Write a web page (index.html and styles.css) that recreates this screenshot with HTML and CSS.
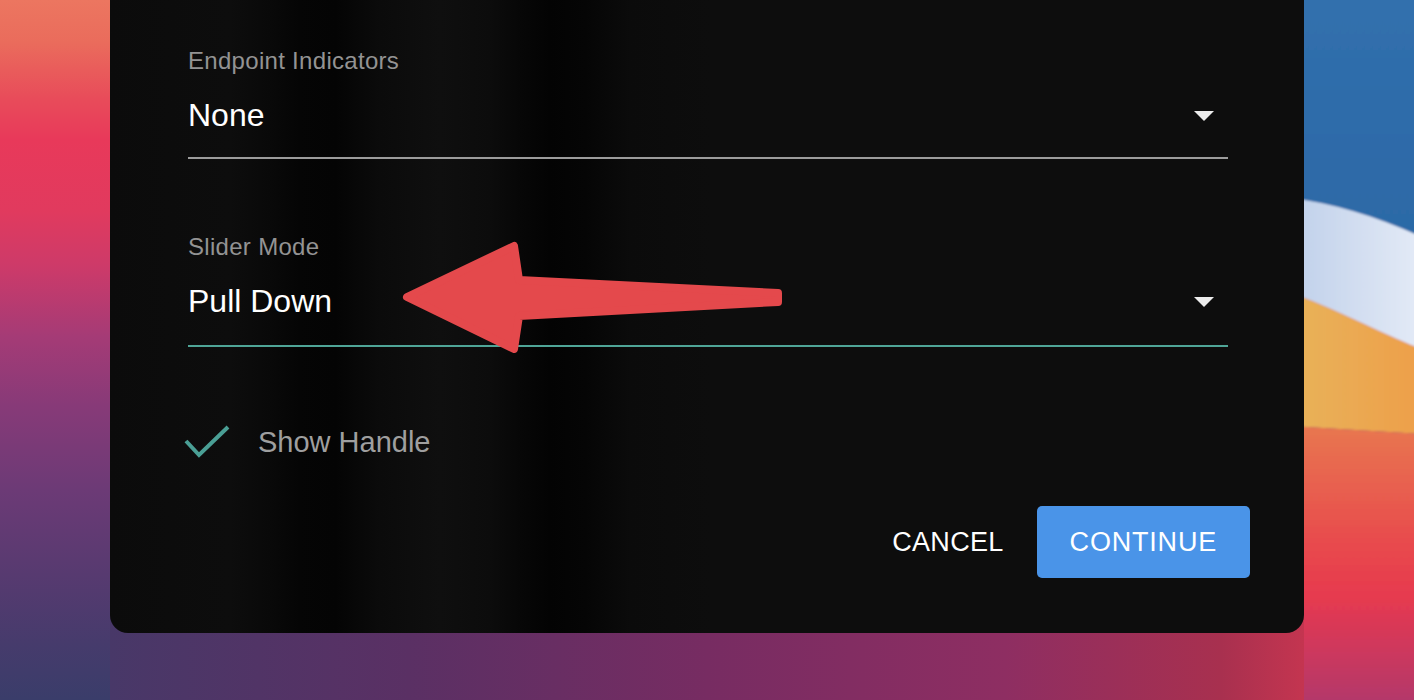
FILE: index.html
```html
<!DOCTYPE html>
<html lang="en">
<head>
<meta charset="utf-8">
<title>Slider settings</title>
<link rel="stylesheet" href="styles.css">
</head>
<body>
<svg class="wallpaper" width="1414" height="700" viewBox="0 0 1414 700" aria-hidden="true">
  <defs>
    <linearGradient id="gLeft" x1="0" y1="0" x2="0" y2="700" gradientUnits="userSpaceOnUse">
      <stop offset="0" stop-color="#ec7660"/>
      <stop offset="0.06" stop-color="#ea6c5c"/>
      <stop offset="0.14" stop-color="#e84c5a"/>
      <stop offset="0.2" stop-color="#e8395a"/>
      <stop offset="0.3" stop-color="#e13a5e"/>
      <stop offset="0.38" stop-color="#cd3a69"/>
      <stop offset="0.48" stop-color="#a53b76"/>
      <stop offset="0.58" stop-color="#873a78"/>
      <stop offset="0.7" stop-color="#6c3a76"/>
      <stop offset="0.82" stop-color="#573a70"/>
      <stop offset="0.92" stop-color="#463b6c"/>
      <stop offset="1" stop-color="#3a3d6a"/>
    </linearGradient>
    <linearGradient id="gBottom" x1="110" y1="0" x2="1304" y2="0" gradientUnits="userSpaceOnUse">
      <stop offset="0" stop-color="#483868"/>
      <stop offset="0.25" stop-color="#5a3064"/>
      <stop offset="0.5" stop-color="#772c62"/>
      <stop offset="0.75" stop-color="#8e2e62"/>
      <stop offset="0.93" stop-color="#a8304f"/>
      <stop offset="1" stop-color="#c43550"/>
    </linearGradient>
    <linearGradient id="gBlue" x1="0" y1="0" x2="0" y2="260" gradientUnits="userSpaceOnUse">
      <stop offset="0" stop-color="#3170ad"/>
      <stop offset="0.3" stop-color="#2f6dab"/>
      <stop offset="1" stop-color="#2c69a6"/>
    </linearGradient>
    <linearGradient id="gWhite" x1="1290" y1="0" x2="1414" y2="0" gradientUnits="userSpaceOnUse">
      <stop offset="0" stop-color="#bfd0ea"/>
      <stop offset="1" stop-color="#e2e9f6"/>
    </linearGradient>
    <linearGradient id="gOrange" x1="1290" y1="0" x2="1414" y2="0" gradientUnits="userSpaceOnUse">
      <stop offset="0" stop-color="#e8b35a"/>
      <stop offset="1" stop-color="#eda04b"/>
    </linearGradient>
    <linearGradient id="gRed" x1="0" y1="428" x2="0" y2="700" gradientUnits="userSpaceOnUse">
      <stop offset="0" stop-color="#e8764f"/>
      <stop offset="0.2" stop-color="#e8624f"/>
      <stop offset="0.45" stop-color="#e8484e"/>
      <stop offset="0.62" stop-color="#e63a4f"/>
      <stop offset="0.8" stop-color="#d0395c"/>
      <stop offset="1" stop-color="#b4396a"/>
    </linearGradient>
    <filter id="soft" x="-5%" y="-5%" width="110%" height="110%">
      <feGaussianBlur stdDeviation="1.2"/>
    </filter>
  </defs>
  <rect x="0" y="0" width="1414" height="700" fill="url(#gLeft)"/>
  <g filter="url(#soft)">
    <rect x="1290" y="-10" width="134" height="270" fill="url(#gBlue)"/>
    <path d="M1290,198 C1335,203 1380,218 1424,238 L1424,350 C1385,336 1335,308 1290,293 Z" fill="url(#gWhite)"/>
    <path d="M1290,293 C1335,308 1385,336 1424,350 L1424,434 L1290,426 Z" fill="url(#gOrange)"/>
    <path d="M1290,426 L1424,434 L1424,710 L1290,710 Z" fill="url(#gRed)"/>
  </g>
  <rect x="110" y="600" width="1194" height="100" fill="url(#gBottom)"/>
</svg>

<main class="dialog">
  <section class="field">
    <div class="field-label">Endpoint Indicators</div>
    <div class="select">
      <span class="select-value">None</span>
      <span class="caret"></span>
    </div>
  </section>

  <section class="field field-second">
    <div class="field-label">Slider Mode</div>
    <div class="select select-focused">
      <span class="select-value">Pull Down</span>
      <span class="caret"></span>
    </div>
  </section>

  <label class="check-row">
    <svg class="check-icon" width="52" height="34" viewBox="0 0 52 34" aria-hidden="true">
      <path d="M4,16 L17,30 L46,2" fill="none" stroke="#4a9f95" stroke-width="4"/>
    </svg>
    <span class="check-text">Show Handle</span>
  </label>

  <div class="actions">
    <button class="btn btn-text" type="button">Cancel</button>
    <button class="btn btn-primary" type="button">Continue</button>
  </div>
</main>

<svg class="annotation" width="1414" height="700" viewBox="0 0 1414 700" aria-hidden="true">
  <path d="M407,297 L514,246 L519,280 L778,293 L778,302 L519,316 L514,349 Z"
        fill="#e4494c" stroke="#e4494c" stroke-width="8" stroke-linejoin="round"/>
</svg>
</body>
</html>
```

FILE: styles.css
```css
* {
  box-sizing: border-box;
}

html, body {
  margin: 0;
  padding: 0;
}

body {
  width: 1414px;
  height: 700px;
  overflow: hidden;
  position: relative;
  font-family: "Liberation Sans", Arial, Helvetica, sans-serif;
  background: #3a3d6a;
}

.wallpaper {
  position: absolute;
  top: 0;
  left: 0;
  z-index: 0;
  display: block;
}

.annotation {
  position: absolute;
  top: 0;
  left: 0;
  z-index: 2;
  pointer-events: none;
}

.dialog {
  position: relative;
  z-index: 1;
  margin-left: 110px;
  width: 1194px;
  height: 633px;
  padding: 49px 54px 0 78px;
  border-radius: 0 0 18px 18px;
  display: flex;
  flex-direction: column;
  background: linear-gradient(90deg,
    #0b0b0b 0px,
    #0d0d0d 120px,
    #090909 160px,
    #050505 190px,
    #040404 225px,
    #0b0b0b 270px,
    #0f0f0f 330px,
    #0c0c0c 380px,
    #070707 410px,
    #030303 440px,
    #050505 475px,
    #0b0b0b 520px,
    #0d0d0d 600px,
    #0d0d0d 100%);
}

.field {
  margin-right: 22px;
}

.field-second {
  margin-top: 76px;
}

.field-label {
  font-size: 24px;
  line-height: 24px;
  letter-spacing: 0.3px;
  color: #939393;
}

.select {
  margin-top: 26px;
  display: flex;
  align-items: flex-start;
  justify-content: space-between;
  padding-bottom: 26px;
  border-bottom: 2px solid #9c9c9c;
}

.select-focused {
  padding-bottom: 28px;
  border-bottom-color: #4fa597;
}

.select-value {
  font-size: 32px;
  line-height: 32px;
  color: #ffffff;
}

.caret {
  width: 0;
  height: 0;
  margin-top: 12px;
  margin-right: 14px;
  border-left: 10px solid transparent;
  border-right: 10px solid transparent;
  border-top: 10px solid #ececec;
}

.check-row {
  margin-top: 78px;
  display: flex;
  align-items: center;
  height: 34px;
}

.check-icon {
  display: block;
  margin-left: -6px;
  margin-right: 24px;
}

.check-text {
  font-size: 29px;
  line-height: 34px;
  color: #9f9f9f;
}

.actions {
  margin-top: 47px;
  display: flex;
  justify-content: flex-end;
  align-items: center;
  gap: 17px;
}

.btn {
  font-family: inherit;
  font-size: 27px;
  letter-spacing: 0.3px;
  text-transform: uppercase;
  border: none;
  height: 72px;
  cursor: pointer;
}

.btn-text {
  background: transparent;
  color: #ffffff;
  padding: 0 16px;
}

.btn-primary {
  background: #4a94e8;
  color: #ffffff;
  letter-spacing: 0.8px;
  padding: 0 33px;
  border-radius: 5px;
}
```
